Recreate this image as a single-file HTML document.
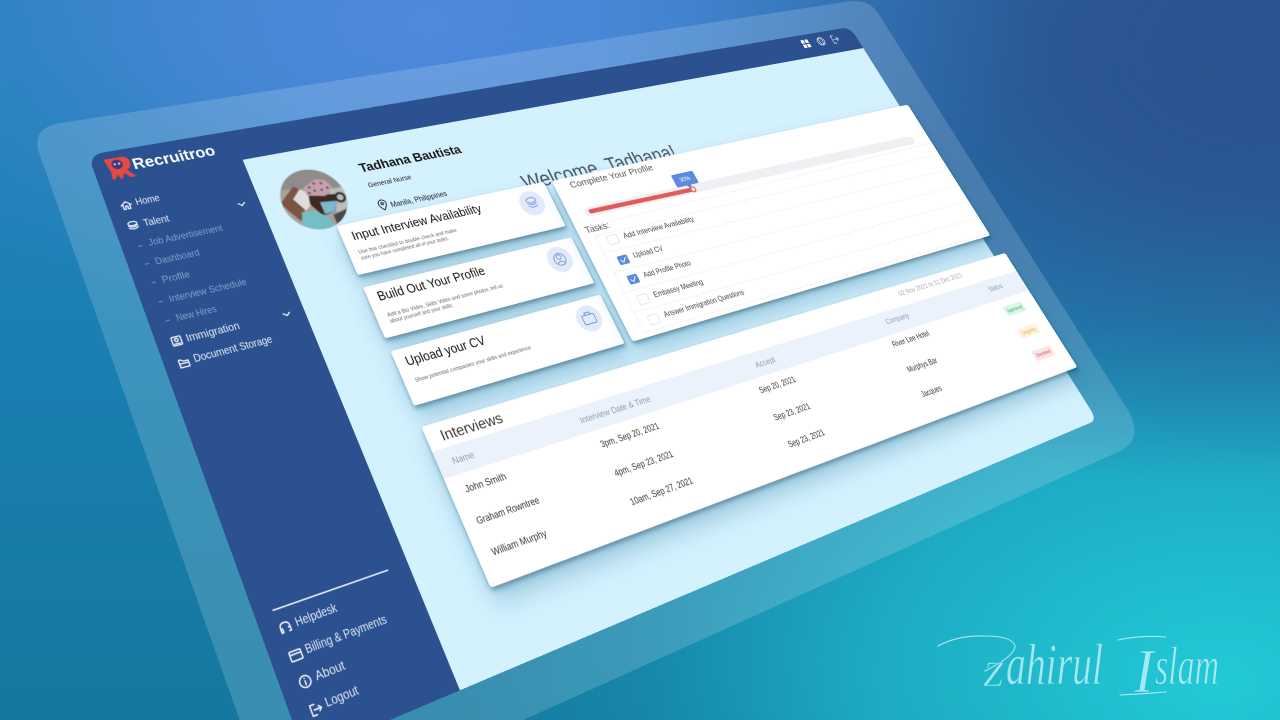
<!DOCTYPE html>
<html lang="en">
<head>
<meta charset="utf-8">
<title>Recruitroo</title>
<style>
html,body{margin:0;padding:0;width:1280px;height:720px;overflow:hidden}
body{position:relative;background:
 radial-gradient(ellipse 600px 320px at 430px 25px,#5089dd 0%,rgba(80,137,221,.72) 35%,rgba(80,137,221,.22) 70%,rgba(80,137,221,0) 100%),
 radial-gradient(ellipse 680px 440px at 1270px 50px,#2b5290 0%,rgba(43,82,144,.92) 30%,rgba(43,82,144,.5) 62%,rgba(43,82,144,0) 100%),
 radial-gradient(ellipse 760px 480px at 1220px 680px,#22cad7 0%,rgba(34,202,215,.62) 45%,rgba(34,202,215,.18) 75%,rgba(34,202,215,0) 100%),
 linear-gradient(180deg,#2a82bd 0%,#1a80b3 45%,#14789f 100%);}
svg{position:absolute;left:0;top:0;overflow:visible;display:block}
#screen{width:1920px;height:1080px;transform-origin:0 0;transform:matrix3d(.570542,-.061151,0,.00020431,.155676,.444324,0,-.00014835,0,0,1,0,88,155,0,1)}
text{font-family:"Liberation Sans",sans-serif}
.nav{fill:#e8eef8;font-size:20px}
.sub{fill:#829fce;font-size:19px}
.bot{fill:#dfe8f5;font-size:20px}
.ic{fill:none;stroke:#e8eef8;stroke-width:2.4;stroke-linecap:round;stroke-linejoin:round}
.t{fill:#111;font-size:25px}
.d{fill:#666;font-size:11px}
.task{fill:#444;font-size:17px}
.th{fill:#8d99ad;font-size:17px}
.td{fill:#333;font-size:18px}
.line{stroke:#f2efec;stroke-width:1.5;fill:none}
.cb{fill:#fff;stroke:#ddd;stroke-width:1.5}
.cc{fill:#5b8ade}
.ck{fill:none;stroke:#fff;stroke-width:2.2;stroke-linecap:round;stroke-linejoin:round}
.ci{fill:#e2eafa}
.cs{fill:none;stroke:#6f97d8;stroke-width:2;stroke-linejoin:round}
.sig{fill:#c6f2f6;fill-opacity:.8;stroke:#25bdcf;stroke-width:.7;font-family:"Liberation Serif",serif;font-style:italic}
</style>
</head>
<body>
<svg width="1280" height="720" viewBox="0 0 1280 720" style="overflow:hidden">
 <path d="M38 150Q33 127 61 123L845 2Q868 -2 878 13L1128 410Q1145 440 1118 452L490 735L245 735Z" fill="#fff" fill-opacity=".16"/>
</svg>

<svg id="screen" width="1920" height="1080">
 <defs>
  <filter id="sh" x="-10%" y="-30%" width="120%" height="190%">
   <feDropShadow dx="0" dy="6" stdDeviation="4" flood-color="#0d2a4a" flood-opacity=".42"/>
   <feDropShadow dx="0" dy="24" stdDeviation="20" flood-color="#2a7398" flood-opacity=".32"/>
  </filter>
  <filter id="bl" x="-5%" y="-5%" width="110%" height="110%"><feGaussianBlur stdDeviation="1"/></filter>
  <clipPath id="ph"><circle cx="64" cy="64" r="64"/></clipPath>
 </defs>

 <!-- base -->
 <rect x="0" y="0" width="1920" height="1080" rx="26" fill="#2b5190"/>
 <path d="M273 65H1920V1056Q1920 1080 1896 1080H273Z" fill="#d4f1fe"/>

 <!-- logo -->
 <g transform="translate(24,15)">
  <path d="M0 0H30Q44 0 44 14Q44 24 34 28L46 44H35L27 33L22 44H17L15 34L9 43H3L5 26Q1 12 0 0Z" fill="#e24a44"/>
  <circle cx="20" cy="14" r="10" fill="#3d3b7a"/>
  <circle cx="16" cy="13" r="2.4" fill="#e9a7c0"/><circle cx="24" cy="13" r="2.4" fill="#e9a7c0"/>
 </g>
 <text x="71" y="45" fill="#fff" font-size="31" font-weight="700" textLength="157" lengthAdjust="spacingAndGlyphs">Recruitroo</text>

 <!-- nav -->
 <g class="ic">
  <path d="M25 113L34 106L43 113M28 111V121H32V115H36V121H40V111"/>
  <ellipse cx="33" cy="151" rx="8" ry="4"/><path d="M25 155Q33 161 41 155M25 159Q33 165 41 159"/>
  <rect x="27" y="377" width="16" height="16" rx="2"/><circle cx="35" cy="383" r="3"/><path d="M30 390H40"/>
  <path d="M26 420V434H42V423H33L30 420ZM26 427H42"/>
  <path d="M32 900V893Q32 885 40 885Q48 885 48 893V900M32 894H35V900H32M45 894H48V900H45"/>
  <rect x="31" y="931" width="19" height="15" rx="2"/><path d="M31 936H50"/>
  <circle cx="40" cy="980" r="9"/><path d="M40 979V985M40 975V975"/>
  <path d="M40 1016H33V1032H40M38 1024H50M46 1020L50 1024L46 1028"/>
  <path d="M232 153L238 158L244 153"/><path d="M233 383L239 388L245 383"/>
 </g>
 <text class="nav" x="52" y="117" textLength="44" lengthAdjust="spacingAndGlyphs">Home</text>
 <text class="nav" x="52" y="161" textLength="47" lengthAdjust="spacingAndGlyphs">Talent</text>
 <g stroke="#829fce" stroke-width="1.6">
  <path d="M29 197H36"/><path d="M29 233H36"/><path d="M29 270H36"/><path d="M29 308H36"/><path d="M29 345H36"/>
 </g>
 <text class="sub" x="48" y="200" textLength="138" lengthAdjust="spacingAndGlyphs">Job Advertisement</text>
 <text class="sub" x="48" y="238" textLength="81" lengthAdjust="spacingAndGlyphs">Dashboard</text>
 <text class="sub" x="48" y="275" textLength="50" lengthAdjust="spacingAndGlyphs">Profile</text>
 <text class="sub" x="48" y="313" textLength="143" lengthAdjust="spacingAndGlyphs">Interview Schedule</text>
 <text class="sub" x="48" y="350" textLength="73" lengthAdjust="spacingAndGlyphs">New Hires</text>
 <text class="nav" x="52" y="391" textLength="97" lengthAdjust="spacingAndGlyphs">Immigration</text>
 <text class="nav" x="52" y="430" textLength="144" lengthAdjust="spacingAndGlyphs">Document Storage</text>

 <path d="M30 862L236 864" stroke="#e8eef7" stroke-width="2.4"/>
 <text class="bot" x="58" y="898" textLength="72" lengthAdjust="spacingAndGlyphs">Helpdesk</text>
 <text class="bot" x="58" y="942" textLength="143" lengthAdjust="spacingAndGlyphs">Billing &amp; Payments</text>
 <text class="bot" x="58" y="985" textLength="50" lengthAdjust="spacingAndGlyphs">About</text>
 <text class="bot" x="58" y="1027" textLength="56" lengthAdjust="spacingAndGlyphs">Logout</text>

 <!-- header icons -->
 <g fill="#fff">
  <rect x="1740" y="14" width="10" height="10"/><rect x="1753" y="14" width="10" height="10"/>
  <rect x="1740" y="27" width="10" height="10"/><rect x="1753" y="27" width="10" height="10"/>
 </g>
 <g fill="none" stroke="#e8eef7" stroke-width="2.2" stroke-linecap="round" stroke-linejoin="round">
  <circle cx="1802" cy="26" r="11"/><ellipse cx="1802" cy="26" rx="5" ry="11"/>
  <path d="M1848 16H1840V38H1848M1846 27H1860M1855 22L1860 27L1855 32"/>
 </g>

 <!-- profile photo -->
 <g transform="translate(313,110)">
  <circle cx="64" cy="64" r="66" fill="#bcd3de"/>
  <g clip-path="url(#ph)"><g filter="url(#bl)">
   <rect x="-4" y="-4" width="136" height="136" fill="#a6a19b"/>
   <path d="M-4 -4H132V60L60 40L-4 30Z" fill="#8e8d8b"/>
   <path d="M100 50L132 50V100H96Z" fill="#bcbcba"/>
   <path d="M24 56L44 38L60 50L54 74L40 84Z" fill="#dededc"/>
   <path d="M88 104L132 94V132H88Z" fill="#484a4e"/>
   <circle cx="116" cy="71" r="9" fill="none" stroke="#2f2f31" stroke-width="5"/>
   <path d="M34 30L44 38L24 56L38 82L22 104L-4 60Z" fill="#7a5442"/>
   <path d="M56 55L108 62L106 77L96 97L68 102L52 73Z" fill="#3d2b24"/>
   <path d="M53 54L53 36L82 23L100 30L110 48L88 62Z" fill="#c4a0ae"/>
   <g fill="#5f3b4b"><circle cx="64" cy="38" r="2.5"/><circle cx="76" cy="32" r="2.5"/><circle cx="90" cy="34" r="2.5"/><circle cx="72" cy="47" r="2.5"/><circle cx="86" cy="48" r="2.5"/><circle cx="99" cy="46" r="2.5"/><circle cx="60" cy="50" r="2.5"/></g>
   <path d="M73 73L106 77L95 97L73 99Z" fill="#7fb6cf"/>
   <path d="M30 86L53 88L73 102L86 132H16Z" fill="#72bfc6"/>
  </g></g>
 </g>

 <text x="492" y="138" fill="#151515" font-size="28" font-weight="700" textLength="229" lengthAdjust="spacingAndGlyphs">Tadhana Bautista</text>
 <text x="494" y="173" fill="#222" font-size="15" textLength="95" lengthAdjust="spacingAndGlyphs">General Nurse</text>
 <g fill="none" stroke="#222" stroke-width="2"><path d="M506 226Q498 218 498 212A8 8 0 0 1 514 212Q514 218 506 226Z"/><circle cx="506" cy="212" r="2.5"/></g>
 <text x="522" y="224" fill="#222" font-size="16" textLength="125" lengthAdjust="spacingAndGlyphs">Manila, Philippines</text>

 <text x="821" y="248" fill="#4a5966" font-size="48" textLength="398" lengthAdjust="spacingAndGlyphs">Welcome, Tadhana!</text>

 <!-- card 1 -->
 <rect x="398" y="238" width="471" height="106" rx="5" fill="#fff" filter="url(#sh)"/>
 <circle class="ci" cx="820" cy="279" r="28"/>
 <g class="cs"><ellipse cx="820" cy="272" rx="11" ry="6"/><path d="M809 278Q820 286 831 278M809 284Q820 292 831 284"/></g>
 <text class="t" x="419" y="274" textLength="285" lengthAdjust="spacingAndGlyphs">Input Interview Availability</text>
 <text class="d" x="418" y="303" textLength="214" lengthAdjust="spacingAndGlyphs">Use this checklist to double check and make</text>
 <text class="d" x="418" y="316" textLength="190" lengthAdjust="spacingAndGlyphs">sure you have completed all of your tasks.</text>

 <!-- card 2 -->
 <rect x="398" y="370" width="471" height="106" rx="5" fill="#fff" filter="url(#sh)"/>
 <circle class="ci" cx="820" cy="410" r="28"/>
 <g class="cs"><circle cx="820" cy="410" r="13"/><circle cx="820" cy="405" r="5"/><path d="M811 419Q820 410 829 419"/></g>
 <text class="t" x="418" y="403" textLength="232" lengthAdjust="spacingAndGlyphs">Build Out Your Profile</text>
 <text class="d" x="421" y="437" textLength="252" lengthAdjust="spacingAndGlyphs">Add a Bio Video, Skills Video and some photos, tell us</text>
 <text class="d" x="421" y="450" textLength="135" lengthAdjust="spacingAndGlyphs">about yourself and your skills.</text>

 <!-- card 3 -->
 <rect x="398" y="502" width="471" height="109" rx="5" fill="#fff" filter="url(#sh)"/>
 <circle class="ci" cx="820" cy="543" r="28"/>
 <g class="cs"><rect x="806" y="535" width="28" height="19" rx="3"/><path d="M814 535V530H826V535"/></g>
 <text class="t" x="418" y="537" textLength="168" lengthAdjust="spacingAndGlyphs">Upload your CV</text>
 <text class="d" x="420" y="570" textLength="251" lengthAdjust="spacingAndGlyphs">Show potential companies your skills and experience</text>

 <!-- complete profile -->
 <rect x="888" y="240" width="1060" height="372" rx="7" fill="#fff" filter="url(#sh)"/>
 <text x="925" y="265" fill="#555" font-size="21" textLength="217" lengthAdjust="spacingAndGlyphs">Complete Your Profile</text>
 <path d="M938 325L1888 333" stroke="#eff0f4" stroke-width="22" stroke-linecap="round"/>
 <path d="M942 325L1213 329" stroke="#e25a5c" stroke-width="10" stroke-linecap="round"/>
 <circle cx="1213" cy="329" r="6" fill="#fff" stroke="#e25a5c" stroke-width="3"/>
 <path d="M1180 286H1232Q1236 286 1236 290V313Q1236 317 1232 317H1214L1208 325L1202 317H1180Q1176 317 1176 313V290Q1176 286 1180 286Z" fill="#5b8ade"/>
 <text x="1206" y="306" fill="#fff" font-size="14" text-anchor="middle">30%</text>
 <text x="908" y="370" fill="#555" font-size="20" textLength="60" lengthAdjust="spacingAndGlyphs">Tasks:</text>
 <g class="line">
  <path d="M923 356L1941 352"/><path d="M923 380L1942 385"/><path d="M923 420L1942 428"/>
  <path d="M923 465L1942 473"/><path d="M923 511L1942 517"/><path d="M923 556L1942 563"/>
  <path d="M923 601L1942 606"/><path d="M923 356V601"/><path d="M1942 352V606"/>
 </g>
 <rect class="cb" x="947" y="386" width="25" height="20" rx="3"/>
 <rect class="cc" x="947" y="434" width="25" height="20" rx="3"/><path class="ck" d="M953 444L958 449L966 440"/>
 <rect class="cc" x="947" y="479" width="25" height="20" rx="3"/><path class="ck" d="M953 489L958 494L966 485"/>
 <rect class="cb" x="947" y="525" width="25" height="20" rx="3"/>
 <rect class="cb" x="947" y="571" width="25" height="20" rx="3"/>
 <text class="task" x="987" y="400" textLength="187" lengthAdjust="spacingAndGlyphs">Add Interview Availability</text>
 <text class="task" x="987" y="446" textLength="76" lengthAdjust="spacingAndGlyphs">Upload CV</text>
 <text class="task" x="987" y="492" textLength="123" lengthAdjust="spacingAndGlyphs">Add Profile Photo</text>
 <text class="task" x="987" y="538" textLength="128" lengthAdjust="spacingAndGlyphs">Embassy Meeting</text>
 <text class="task" x="987" y="583" textLength="212" lengthAdjust="spacingAndGlyphs">Answer Immigration Questions</text>

 <!-- table -->
 <g transform="translate(395,651) skewY(.4) translate(-395,-651)">
  <rect x="395" y="651" width="1564" height="298" rx="6" fill="#fff" filter="url(#sh)"/>
  <rect x="395" y="699" width="1564" height="52" fill="#ebf2fb"/>
  <text x="423" y="686" fill="#3a3a3a" font-size="28" textLength="128" lengthAdjust="spacingAndGlyphs">Interviews</text>
  <text x="1588" y="676" fill="#a3aab6" font-size="16" textLength="205" lengthAdjust="spacingAndGlyphs">02 Nov 2021 to 31 Dec 2021</text>
  <text class="th" x="424" y="731" textLength="44" lengthAdjust="spacingAndGlyphs">Name</text>
  <text class="th" x="700" y="731" textLength="165" lengthAdjust="spacingAndGlyphs">Interview Date &amp; Time</text>
  <text class="th" x="1134" y="731" textLength="52" lengthAdjust="spacingAndGlyphs">Accept</text>
  <text class="th" x="1511" y="727" textLength="70" lengthAdjust="spacingAndGlyphs">Company</text>
  <text class="th" x="1844" y="727" textLength="46" lengthAdjust="spacingAndGlyphs">Status</text>
  <text class="td" x="425" y="785" textLength="84" lengthAdjust="spacingAndGlyphs">John Smith</text>
  <text class="td" x="421" y="843" textLength="129" lengthAdjust="spacingAndGlyphs">Graham Rowntree</text>
  <text class="td" x="424" y="901" textLength="112" lengthAdjust="spacingAndGlyphs">William Murphy</text>
  <text class="td" x="718" y="785" textLength="136" lengthAdjust="spacingAndGlyphs">3pm, Sep 20, 2021</text>
  <text class="td" x="718" y="843" textLength="136" lengthAdjust="spacingAndGlyphs">4pm, Sep 23, 2021</text>
  <text class="td" x="722" y="901" textLength="145" lengthAdjust="spacingAndGlyphs">10am, Sep 27, 2021</text>
  <text class="td" x="1112" y="782" textLength="96" lengthAdjust="spacingAndGlyphs">Sep 20, 2021</text>
  <text class="td" x="1112" y="842" textLength="96" lengthAdjust="spacingAndGlyphs">Sep 23, 2021</text>
  <text class="td" x="1112" y="900" textLength="96" lengthAdjust="spacingAndGlyphs">Sep 23, 2021</text>
  <text class="td" x="1494" y="778" textLength="112" lengthAdjust="spacingAndGlyphs">River Lee Hotel</text>
  <text class="td" x="1495" y="838" textLength="90" lengthAdjust="spacingAndGlyphs">Murphys Bar</text>
  <text class="td" x="1494" y="896" textLength="60" lengthAdjust="spacingAndGlyphs">Jacques</text>
  <rect x="1852" y="769" width="64" height="24" rx="5" fill="#dbf6e7"/>
  <text x="1884" y="785" fill="#3aa76d" font-size="12" text-anchor="middle">Approved</text>
  <rect x="1853" y="826" width="64" height="24" rx="5" fill="#fdf3dc"/>
  <text x="1885" y="842" fill="#dcaa4c" font-size="12" text-anchor="middle">Ongoing</text>
  <rect x="1855" y="883" width="64" height="24" rx="5" fill="#fde5e6"/>
  <text x="1887" y="899" fill="#c9565c" font-size="12" text-anchor="middle">Declined</text>
 </g>
</svg>

<svg width="1280" height="720" viewBox="0 0 1280 720" style="pointer-events:none">
 <g fill="none" stroke="#c6f2f6" stroke-width="1.1" stroke-linecap="round" opacity=".85">
  <path d="M938 646Q958 635 985 636Q1012 636 1015 646Q1015 656 985 671"/>
  <path d="M1118 640Q1140 635 1166 637"/>
  <path d="M1120 695Q1140 694 1166 692"/>
 </g>
 <text class="sig" x="983" y="686" font-size="36">Z</text>
 <text class="sig" x="1006" y="684" font-size="58" textLength="97" lengthAdjust="spacingAndGlyphs">ahirul</text>
 <text class="sig" x="1134" y="692" font-size="62" textLength="20" lengthAdjust="spacingAndGlyphs">I</text>
 <text class="sig" x="1155" y="684" font-size="54" textLength="64" lengthAdjust="spacingAndGlyphs">slam</text>
</svg>
</body>
</html>
